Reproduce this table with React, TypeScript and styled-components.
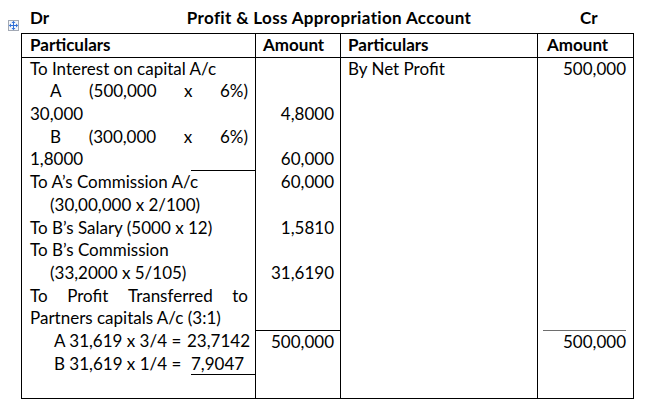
import React from "react";
import styled, { createGlobalStyle } from "styled-components";

const LH = "22.7px";

const GlobalStyle = createGlobalStyle`
  html, body { margin: 0; padding: 0; background: #ffffff; }
  body {
    font-family: Lato, "Liberation Sans", sans-serif;
    font-size: 17px;
    color: #000000;
  }
`;

const Page = styled.div`
  padding: 7px 0 0 21px;
  width: 613px;
`;

const TitleRow = styled.div`
  display: grid;
  grid-template-columns: 234px 85px 197px 97px;
  height: 26px;
  line-height: ${LH};
  font-weight: 700;
`;

const TitleDr = styled.div`
  grid-row: 1;
  grid-column: 1;
  padding-left: 9px;
`;

const TitleMain = styled.div`
  grid-row: 1;
  grid-column: 1 / -1;
  justify-self: center;
  padding-left: 3px;
  letter-spacing: 0.35px;
`;

const TitleCr = styled.div`
  grid-row: 1;
  grid-column: 4;
  padding-left: 43px;
`;

const Table = styled.div`
  position: relative;
  display: grid;
  grid-template-columns: 233px 85px 197px 96px;
  border: 1px solid #000;
  line-height: ${LH};
`;

const Cell = styled.div<{ $first?: boolean; $head?: boolean; $pl: number; $pr: number }>`
  border-left: ${(p) => (p.$first ? "none" : "1px solid #000")};
  border-bottom: ${(p) => (p.$head ? "1px solid #000" : "none")};
  font-weight: ${(p) => (p.$head ? 700 : 400)};
  padding: 0 ${(p) => p.$pr}px 0 ${(p) => p.$pl}px;
  display: flex;
  flex-direction: column;
`;

const Line = styled.div<{ $indent?: number; $align?: "left" | "right" }>`
  height: ${LH};
  white-space: pre;
  padding-left: ${(p) => p.$indent ?? 0}px;
  text-align: ${(p) => p.$align ?? "left"};
`;

const JustLine = styled.div<{ $indent?: number }>`
  height: ${LH};
  display: flex;
  justify-content: space-between;
  padding-left: ${(p) => p.$indent ?? 0}px;
`;

const SplitLine = styled.div`
  height: ${LH};
  display: flex;
  white-space: pre;
`;

const Label = styled.span<{ $w: number }>`
  flex: 0 0 ${(p) => p.$w}px;
  padding-left: 24px;
  box-sizing: border-box;
`;

const Underlined = styled.span<{ $w?: number }>`
  flex: ${(p) => (p.$w ? `0 0 ${p.$w}px` : "1 1 auto")};
  margin-left: ${(p) => (p.$w ? "auto" : "0")};
  margin-right: -7px;
  border-bottom: 1px solid #000;
`;

const RuledLine = styled.div<{ $tone: string; $ml: number; $mr: number; $pr: number }>`
  height: ${LH};
  text-align: right;
  border-top: 1px solid ${(p) => p.$tone};
  margin: 0 ${(p) => p.$mr}px 0 ${(p) => p.$ml}px;
  padding-right: ${(p) => p.$pr}px;
  box-sizing: border-box;
`;

const MoveHandle = styled.div`
  position: absolute;
  left: -14px;
  top: -14px;
  width: 11px;
  height: 11px;
  box-sizing: border-box;
  border: 1px solid #a3a9b4;
  background: #f4f6fa;
  display: flex;
  align-items: center;
  justify-content: center;
`;

const ResizeHandle = styled.div`
  position: absolute;
  right: -7px;
  bottom: -7px;
  width: 6px;
  height: 6px;
  box-sizing: border-box;
  border: 1px solid #8c8c8c;
  background: #fff;
`;

const MoveIcon = () => (
  <svg width="9" height="9" viewBox="0 0 9 9">
    <g fill="none" stroke="#2f6fd6" strokeWidth="1">
      <line x1="4.5" y1="0.5" x2="4.5" y2="8.5" />
      <line x1="0.5" y1="4.5" x2="8.5" y2="4.5" />
    </g>
    <g fill="#2f6fd6">
      <polygon points="4.5,0 2.5,2 6.5,2" />
      <polygon points="4.5,9 2.5,7 6.5,7" />
      <polygon points="0,4.5 2,2.5 2,6.5" />
      <polygon points="9,4.5 7,2.5 7,6.5" />
    </g>
  </svg>
);

const J = ({ words, indent }: { words: string[]; indent?: number }) => (
  <JustLine $indent={indent}>
    {words.map((w, i) => (
      <span key={i}>{w}</span>
    ))}
  </JustLine>
);

export default function App() {
  return (
    <>
      <GlobalStyle />
      <Page>
        <TitleRow>
          <TitleDr>Dr</TitleDr>
          <TitleMain>Profit &amp; Loss Appropriation Account</TitleMain>
          <TitleCr>Cr</TitleCr>
        </TitleRow>
        <Table>
          <MoveHandle>
            <MoveIcon />
          </MoveHandle>
          <ResizeHandle />

          <Cell $first $head $pl={8} $pr={7}>
            <Line>Particulars</Line>
          </Cell>
          <Cell $head $pl={7} $pr={6}>
            <Line>Amount</Line>
          </Cell>
          <Cell $head $pl={7} $pr={6}>
            <Line>Particulars</Line>
          </Cell>
          <Cell $head $pl={9} $pr={7}>
            <Line>Amount</Line>
          </Cell>

          <Cell $first $pl={8} $pr={7}>
            <Line>To Interest on capital A/c</Line>
            <J indent={20} words={["A", "(500,000", "x", "6%)"]} />
            <Line>30,000</Line>
            <J indent={20} words={["B", "(300,000", "x", "6%)"]} />
            <SplitLine>
              <span>1,8000</span>
              <Underlined $w={64} />
            </SplitLine>
            <Line>To A’s Commission A/c</Line>
            <Line $indent={20}>(30,00,000 x 2/100)</Line>
            <Line>To B’s Salary (5000 x 12)</Line>
            <Line>To B’s Commission</Line>
            <Line $indent={20}>(33,2000 x 5/105)</Line>
            <J words={["To", "Profit", "Transferred", "to"]} />
            <Line>Partners capitals A/c (3:1)</Line>
            <SplitLine>
              <Label $w={157}>A 31,619 x 3/4 =</Label>
              <span>23,7142</span>
            </SplitLine>
            <SplitLine>
              <Label $w={161}>B 31,619 x 1/4 =</Label>
              <Underlined>7,9047</Underlined>
            </SplitLine>
            <Line />
          </Cell>

          <Cell $pl={7} $pr={6}>
            <Line />
            <Line />
            <Line $align="right">4,8000</Line>
            <Line />
            <Line $align="right">60,000</Line>
            <Line $align="right">60,000</Line>
            <Line />
            <Line $align="right">1,5810</Line>
            <Line />
            <Line $align="right">31,6190</Line>
            <Line />
            <Line />
            <RuledLine $tone="#000" $ml={-7} $mr={-6} $pr={6}>500,000</RuledLine>
            <Line />
            <Line />
          </Cell>

          <Cell $pl={7} $pr={6}>
            <Line>By Net Profit</Line>
          </Cell>

          <Cell $pl={9} $pr={7}>
            <Line $align="right">500,000</Line>
            {Array.from({ length: 11 }).map((_, i) => (
              <Line key={i} />
            ))}
            <RuledLine $tone="#6e6e6e" $ml={-4} $mr={0} $pr={0}>500,000</RuledLine>
            <Line />
            <Line />
          </Cell>
        </Table>
      </Page>
    </>
  );
}
